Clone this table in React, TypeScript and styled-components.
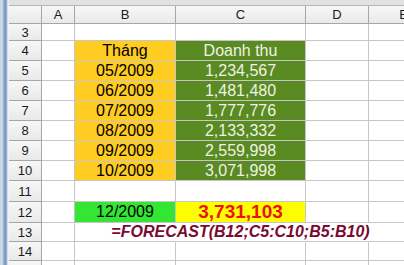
import * as React from 'react';
import { styled, createGlobalStyle } from 'styled-components';

const GlobalStyle = createGlobalStyle`
  html, body {
    margin: 0;
    padding: 0;
    background: #ffffff;
    overflow: hidden;
  }
`;

const Window = styled.div`
  display: flex;
  width: 404px;
  height: 265px;
  overflow: hidden;
  font-family: 'Liberation Sans', Arial, sans-serif;
`;

const Frame = styled.div`
  flex: 0 0 9px;
  background: linear-gradient(
    to right,
    #c3d1e4 0px,
    #d7e1ee 2px,
    #8aa3c7 4px,
    #7592bd 6px,
    #b9c9de 7px,
    #eef2f8 8px
  );
`;

const Sheet = styled.div`
  flex: 1;
  display: flex;
  flex-direction: column;
  min-width: 0;
`;

const TopStrip = styled.div`
  height: 5px;
  flex: 0 0 5px;
  background: #e2e2e2;
  border-bottom: 1px solid #b8b8b8;
`;

const Grid = styled.div`
  display: grid;
  grid-template-columns: 33px 33px 101px 130px 63px 70px;
  grid-template-rows: 18px 17px repeat(7, 20px) 21px 21px 19px 19px 20px;
  background: #ffffff;
`;

const Head = styled.div<{ $corner?: boolean }>`
  box-sizing: border-box;
  display: flex;
  align-items: center;
  justify-content: center;
  background: linear-gradient(to bottom, #f7f7f7, #e9e9e9);
  border-right: 1px solid #a6a6a6;
  border-bottom: 1px solid #a6a6a6;
  color: #1a1a1a;
  font-size: 13px;
`;

const Cell = styled.div<{
  $bg?: string;
  $color?: string;
  $size?: number;
  $bold?: boolean;
  $italic?: boolean;
  $noRight?: boolean;
}>`
  box-sizing: border-box;
  display: flex;
  align-items: center;
  justify-content: center;
  white-space: nowrap;
  overflow: visible;
  background: ${(p) => p.$bg || 'transparent'};
  color: ${(p) => p.$color || '#000000'};
  font-size: ${(p) => p.$size || 16}px;
  font-weight: ${(p) => (p.$bold ? 700 : 400)};
  font-style: ${(p) => (p.$italic ? 'italic' : 'normal')};
  border-right: 1px solid ${(p) => (p.$noRight ? 'transparent' : '#c6c6c6')};
  border-bottom: 1px solid #c6c6c6;
`;

const YELLOW = '#ffcc22';
const OLIVE = '#5a8a22';
const ON_OLIVE = '#eef3e2';

const data = [
  ['05/2009', '1,234,567'],
  ['06/2009', '1,481,480'],
  ['07/2009', '1,777,776'],
  ['08/2009', '2,133,332'],
  ['09/2009', '2,559,998'],
  ['10/2009', '3,071,998'],
];

const Blank = () => (
  <>
    <Cell />
    <Cell />
  </>
);

export default function App() {
  return (
    <>
      <GlobalStyle />
      <Window>
        <Frame />
        <Sheet>
          <TopStrip />
          <Grid>
            <Head $corner />
            <Head>A</Head>
            <Head>B</Head>
            <Head>C</Head>
            <Head>D</Head>
            <Head>E</Head>

            <Head>3</Head>
            <Cell />
            <Cell />
            <Cell />
            <Blank />

            <Head>4</Head>
            <Cell />
            <Cell $bg={YELLOW}>Tháng</Cell>
            <Cell $bg={OLIVE} $color={ON_OLIVE}>
              Doanh thu
            </Cell>
            <Blank />

            {data.map(([m, v], i) => (
              <React.Fragment key={m}>
                <Head>{i + 5}</Head>
                <Cell />
                <Cell $bg={YELLOW}>{m}</Cell>
                <Cell $bg={OLIVE} $color={ON_OLIVE}>
                  {v}
                </Cell>
                <Blank />
              </React.Fragment>
            ))}

            <Head>11</Head>
            <Cell />
            <Cell />
            <Cell />
            <Blank />

            <Head>12</Head>
            <Cell />
            <Cell $bg="#33e633">12/2009</Cell>
            <Cell $bg="#ffff00" $color="#ee1111" $size={19} $bold>
              3,731,103
            </Cell>
            <Blank />

            <Head>13</Head>
            <Cell />
            <Cell $noRight />
            <Cell $noRight $color="#7a0a30" $bold $italic>
              =FORECAST(B12;C5:C10;B5:B10)
            </Cell>
            <Cell $noRight />
            <Cell />

            <Head>14</Head>
            <Cell />
            <Cell />
            <Cell />
            <Blank />

            <Head>15</Head>
            <Cell />
            <Cell />
            <Cell />
            <Blank />
          </Grid>
        </Sheet>
      </Window>
    </>
  );
}
